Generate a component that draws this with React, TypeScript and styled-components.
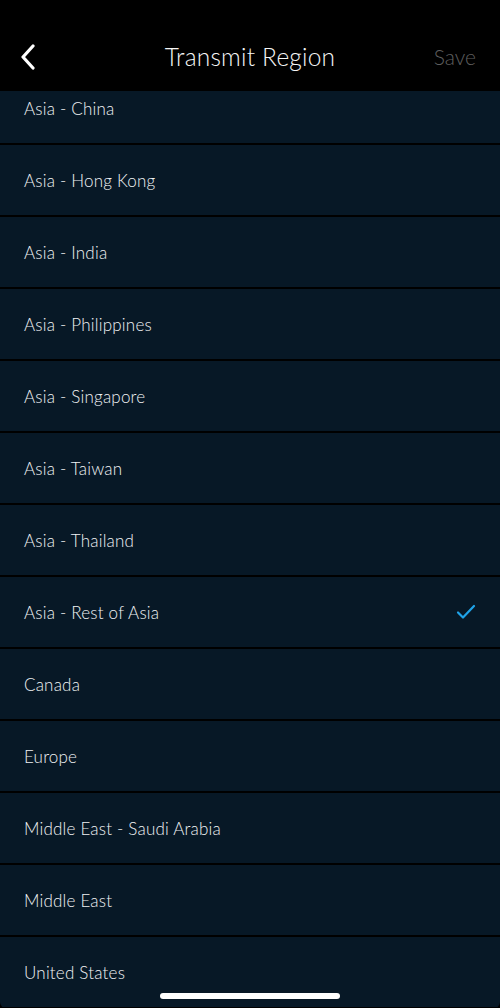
import React from 'react';
import styled, {createGlobalStyle} from 'styled-components';

const REGIONS = [
  'Asia - China',
  'Asia - Hong Kong',
  'Asia - India',
  'Asia - Philippines',
  'Asia - Singapore',
  'Asia - Taiwan',
  'Asia - Thailand',
  'Asia - Rest of Asia',
  'Canada',
  'Europe',
  'Middle East - Saudi Arabia',
  'Middle East',
  'United States',
];

const SELECTED = 'Asia - Rest of Asia';

const GlobalStyle = createGlobalStyle`
  html, body {
    margin: 0;
    padding: 0;
    background: #000;
  }
  body {
    font-family: Lato, "Open Sans", "Liberation Sans", sans-serif;
    -webkit-font-smoothing: antialiased;
  }
`;

const Screen = styled.div`
  width: 500px;
  height: 1008px;
  background: #000;
  display: flex;
  flex-direction: column;
  overflow: hidden;
  position: relative;
`;

const Header = styled.header`
  height: 91px;
  flex-shrink: 0;
  display: grid;
  grid-template-columns: 90px 1fr 90px;
  align-items: end;
  padding-bottom: 20px;
  box-sizing: border-box;
`;

const BackButton = styled.button`
  background: none;
  border: none;
  padding: 0 0 0 20px;
  justify-self: start;
  display: flex;
  align-items: center;
  height: 28px;
  cursor: pointer;
`;

const Title = styled.h1`
  margin: 0;
  text-align: center;
  font-size: 24.5px;
  font-weight: 300;
  color: #f6f6f6;
  line-height: 28px;
  letter-spacing: 0.2px;
`;

const SaveButton = styled.button`
  background: none;
  border: none;
  justify-self: end;
  padding: 0 24px 0 0;
  font-family: inherit;
  font-size: 21px;
  font-weight: 300;
  line-height: 28px;
  color: #5e5e5e;
`;

const ListViewport = styled.div`
  flex: 1;
  overflow: hidden;
  border-radius: 0 0 6px 6px;
`;

const List = styled.ul`
  list-style: none;
  margin: -18px 0 0 0;
  padding: 0;
  display: flex;
  flex-direction: column;
  gap: 2px;
`;

const Row = styled.li`
  height: 70px;
  flex-shrink: 0;
  background: #071826;
  display: flex;
  align-items: center;
  justify-content: space-between;
  padding: 0 24px;
  box-sizing: border-box;
`;

const Label = styled.span`
  font-size: 17px;
  font-weight: 300;
  color: #f0f2f4;
  letter-spacing: 0.2px;
`;

const HomeIndicator = styled.div`
  position: absolute;
  left: 160px;
  bottom: 9px;
  width: 180px;
  height: 6px;
  border-radius: 3px;
  background: #fff;
`;

function Chevron() {
  return (
    <svg width="16" height="26" viewBox="0 0 16 26">
      <path d="M13 2 L3 13 L13 24" fill="none" stroke="#fff" strokeWidth="3.2" strokeLinecap="round" strokeLinejoin="round" />
    </svg>
  );
}

function Check() {
  return (
    <svg width="20" height="16" viewBox="0 0 20 16">
      <path d="M2 8.5 L7 13.5 L18 2" fill="none" stroke="#1fa3e8" strokeWidth="2.2" strokeLinecap="round" strokeLinejoin="round" />
    </svg>
  );
}

function App() {
  return (
    <>
      <GlobalStyle />
      <Screen>
        <Header>
          <BackButton aria-label="Back">
            <Chevron />
          </BackButton>
          <Title>Transmit Region</Title>
          <SaveButton>Save</SaveButton>
        </Header>
        <ListViewport>
          <List>
            {REGIONS.map(name => (
              <Row key={name}>
                <Label>{name}</Label>
                {name === SELECTED ? <Check /> : null}
              </Row>
            ))}
          </List>
        </ListViewport>
        <HomeIndicator />
      </Screen>
    </>
  );
}

export default App;
